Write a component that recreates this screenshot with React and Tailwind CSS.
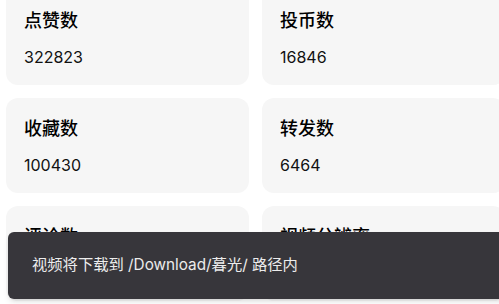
const stats = [
  { label: '点赞数', value: '322823' },
  { label: '投币数', value: '16846' },
  { label: '收藏数', value: '100430' },
  { label: '转发数', value: '6464' },
  { label: '评论数', value: '1735' },
  { label: '视频分辨率', value: '1920x1080' },
];

const font = { fontFamily: 'Inter, "Noto Sans CJK SC", sans-serif' };

const StatCard = ({ label, value }) => (
  <div className="h-[95px] rounded-[12px] bg-[#f6f6f6] pl-[18px] pt-[18px]">
    <p className="text-[18px] leading-[26px] font-medium text-black">{label}</p>
    <p className="mt-[10px] text-[16px] leading-[26px] text-[#111]">{value}</p>
  </div>
);

const App = () => {
  return (
    <div className="relative w-[499px] h-[304px] overflow-hidden bg-white" style={font}>
      <div className="mt-[-10px] ml-[6px] grid grid-cols-[243px_243px] gap-x-[13px] gap-y-[13px] w-[510px]">
        {stats.map((s) => (
          <StatCard key={s.label} label={s.label} value={s.value} />
        ))}
      </div>

      <div className="absolute left-[8px] top-[232px] w-[500px] h-[67px] rounded-[6px] bg-[#37363b] shadow-md flex items-center pl-[24px]">
        <span className="text-[15.3px] text-[#ececec]">视频将下载到 /Download/暮光/ 路径内</span>
      </div>
    </div>
  );
};

export default App;
